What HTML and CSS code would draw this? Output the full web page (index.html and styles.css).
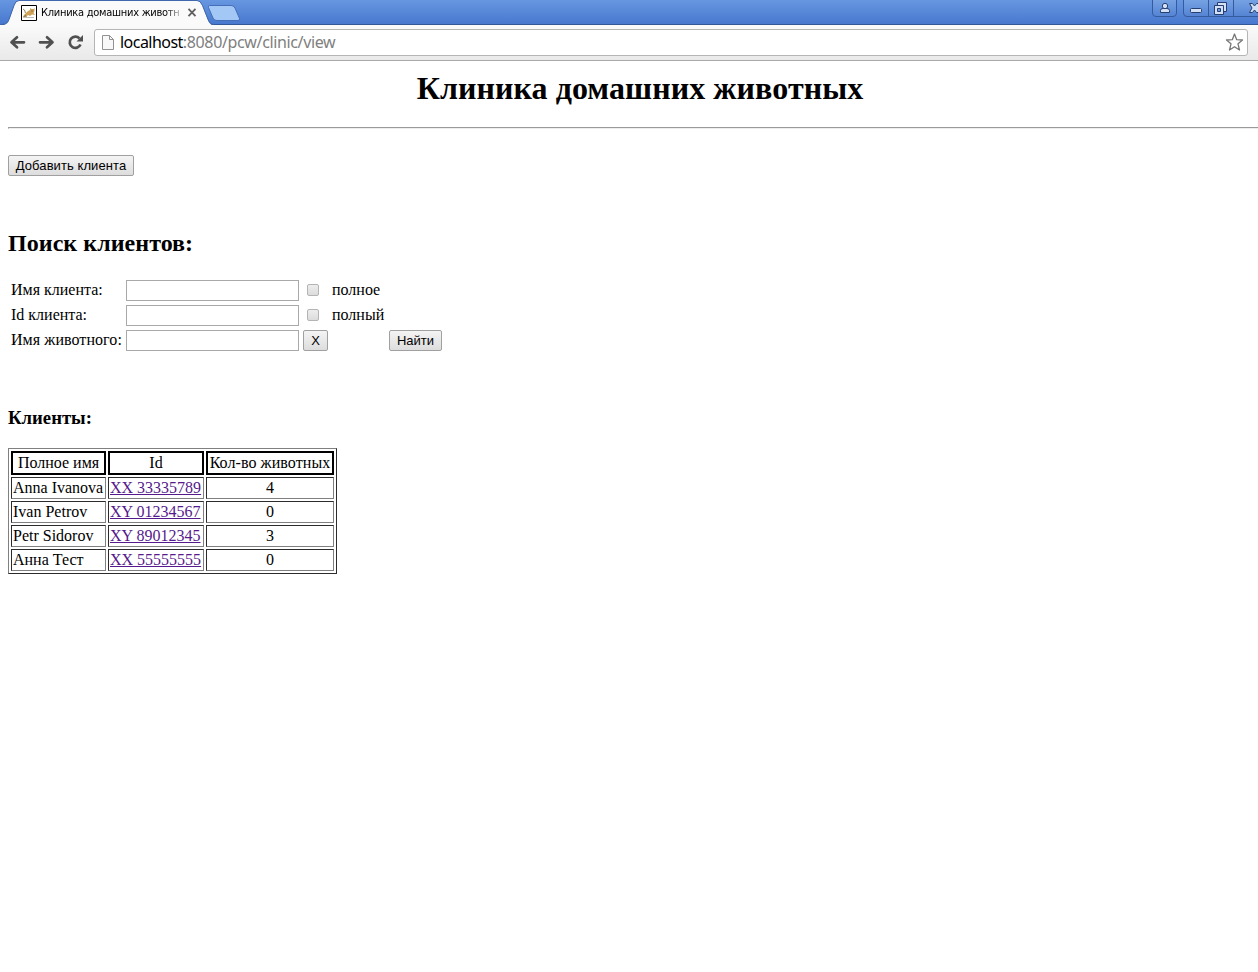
FILE: index.html
```html
<!DOCTYPE html>
<html lang="ru">
<head>
<meta charset="utf-8">
<title>Клиника домашних животных</title>
<link rel="stylesheet" href="styles.css">
</head>
<body>
<header class="browser">
  <div class="tabstrip">
    <svg class="frame" width="1258" height="26" viewBox="0 0 1258 26">
      <defs>
        <linearGradient id="sky" x1="0" y1="0" x2="0" y2="1"><stop offset="0" stop-color="#6797e0"/><stop offset="1" stop-color="#4778cf"/></linearGradient>
        <linearGradient id="btn" x1="0" y1="0" x2="0" y2="1"><stop offset="0" stop-color="#78a4e4"/><stop offset="1" stop-color="#5483d3"/></linearGradient>
      </defs>
      <rect width="1258" height="24" fill="url(#sky)"/>
      <rect y="24" width="1258" height="1" fill="#345797"/>
      <path d="M0 25.500C7 25 8 23 9.500 19L14 6Q15.500 .7 19 .7H197Q200.500 .7 202.500 6L207.500 19Q209.500 25 214 25.500V26H0Z" fill="#fafafa"/>
      <path d="M0 24.500C7 24.500 8 22 9.500 18L14 5.500Q15.500 .5 19 .5H197Q200.500 .5 202.500 5.500L207.500 18Q209.500 24.500 214 24.500" fill="none" stroke="#4168ae"/>
      <path d="M209.500 5.500H231Q234 5.500 235 8L239.500 18.500Q240 20.500 238 20.500H217Q214 20.500 213 18L208.500 7.500Q208 5.500 209.500 5.500Z" fill="#a4c8f6" stroke="#446eb7"/>
      <g fill="url(#btn)" stroke="#355a9e">
        <path d="M1152.500 -1V13Q1152.500 16.500 1156 16.500H1173Q1176.500 16.500 1176.500 13V-1Z"/>
        <path d="M1183.500 -1V13Q1183.500 16.500 1187 16.500H1260V-1Z"/>
        <path d="M1208.500 0V16M1233.500 0V16"/>
      </g>
      <g fill="#d3e1f7" stroke="#263f70">
        <path d="M1160.500 12.500V10.500Q1160.500 8.500 1163 8.500H1167Q1169.500 8.500 1169.500 10.500V12.500Z"/>
        <circle cx="1165" cy="6" r="2.700"/>
        <rect x="1190.500" y="8.500" width="11" height="4" rx="1"/>
        <path d="M1217.500 2.500H1226.500V11.500H1217.500Z"/>
        <path d="M1214.500 5.500H1223.500V14.500H1214.500Z"/>
        <path d="M1217.500 8.500H1220.500V11.500H1217.500Z" fill="#6e9ae0"/>
        <path d="M1249.500 3.500H1252.500L1254.500 6L1256.500 3.500H1260V12.500H1256.500L1254.500 10L1252.500 12.500H1249.500L1252 8Z"/>
      </g>
    </svg>
    <div class="tab">
      <svg class="favicon" width="16" height="16" viewBox="0 0 16 16">
        <path d="M.5 .5H15.500V15.500H.5Z" fill="#fff" stroke="#000"/>
        <path d="M7 6L9 5V3L10.500 4L12.500 4L13.500 3V6L12.500 8L14 10L11 9.500L9 11L7 10L5 12L2 12L3 10L5 8Z" fill="#cfa25a"/>
        <path d="M2 4L3.500 5L4.500 8M5 10L2.500 12H6M10 6H12" fill="none" stroke="#8a7458" stroke-width=".9"/>
        <path d="M6 12.500H13" stroke="#bbb"/>
      </svg>
      <span class="tab-title">Клиника домашних животн</span>
      <svg class="close" width="10" height="9" viewBox="0 0 10 9"><path d="M1.500 .8L8.500 8.200M8.500 .8L1.500 8.200" stroke="#606060" stroke-width="1.800"/></svg>
    </div>
  </div>
  <div class="toolbar">
    <svg width="78" height="22" viewBox="0 0 78 22" fill="none" stroke="#505050" stroke-width="2.700" stroke-linecap="round" stroke-linejoin="round">
      <path d="M4 11.300H16M9 6.300L3.500 11.300L9 16.300"/>
      <path d="M32 11.300H44M39 6.300L44.500 11.300L39 16.300"/>
      <path d="M71.500 7.500A5.600 5.600 0 1 0 72.500 13.500" stroke-linecap="butt"/>
      <path d="M75 4V10.500H68.500Z" fill="#505050" stroke="none"/>
    </svg>
    <div class="address">
      <svg width="12" height="15" viewBox="0 0 12 15"><path d="M.5 .5H7.500L11.500 4.500V14.500H.5Z" fill="#f8f8f8" stroke="#929292"/><path d="M7.500 .5V4.500H11.500" fill="none" stroke="#929292"/></svg>
      <span class="url"><b>localhost</b>:8080/pcw/clinic/view</span>
      <svg class="star" width="20" height="20" viewBox="0 0 20 20"><path d="M10.500 2L12.700 7.700L18.500 8L14 11.800L15.500 18L10.500 14.700L5.500 18L7 11.800L2.500 8L8.300 7.700Z" fill="#fff" stroke="#777" stroke-width="1.300" stroke-linejoin="round"/></svg>
    </div>
  </div>
</header>
<main class="page">
  <h1>Клиника домашних животных</h1>
  <hr>
  <button class="button add">Добавить клиента</button>
  <h2>Поиск клиентов:</h2>
  <form class="search">
    <label>Имя клиента:</label><input class="field" type="text"><input class="check" type="checkbox"><span>полное</span><span></span>
    <label>Id клиента:</label><input class="field" type="text"><input class="check" type="checkbox"><span>полный</span><span></span>
    <label class="pet">Имя животного:</label><input class="field" type="text"><button class="button clear" type="button">X</button><span></span><button class="button find" type="button">Найти</button>
  </form>
  <h3>Клиенты:</h3>
  <table class="clients">
    <colgroup><col class="c1"><col class="c2"><col class="c3"></colgroup>
    <tr class="head"><td>Полное имя</td><td>Id</td><td class="count">Кол-во животных</td></tr>
    <tr><td>Anna Ivanova</td><td><a href="#">XX 33335789</a></td><td>4</td></tr>
    <tr><td>Ivan Petrov</td><td><a href="#">XY 01234567</a></td><td>0</td></tr>
    <tr><td>Petr Sidorov</td><td><a href="#">XY 89012345</a></td><td>3</td></tr>
    <tr><td>Анна Тест</td><td><a href="#">XX 55555555</a></td><td>0</td></tr>
  </table>
</main>
</body>
</html>
```
FILE: styles.css
```css
* { box-sizing: border-box; }
html { overflow: hidden; background: #fff; }
body { margin: 0; width: 1258px; height: 972px; overflow: hidden; font: 16px/20px "Liberation Serif", "Times New Roman", serif; color: #000; }
.tabstrip { position: relative; height: 25px; }
.frame { position: absolute; left: 0; top: 0; }
.tab { position: relative; display: flex; align-items: center; width: 197px; height: 25px; padding-left: 21px; }
.tab-title { width: 140px; margin: 0 6px 0 4px; white-space: nowrap; font: 11px/16px "DejaVu Sans Condensed", "Noto Sans", sans-serif; letter-spacing: -.27px; -webkit-mask-image: linear-gradient(90deg, #000 125px, rgba(0, 0, 0, .2)); mask-image: linear-gradient(90deg, #000 125px, rgba(0, 0, 0, .2)); }
.favicon, .close { flex: none; }
.toolbar { display: flex; align-items: center; height: 36px; padding: 0 10px 1px 8px; gap: 8px; background: linear-gradient(#fafafa, #e9e9e9); border-bottom: 1px solid #a9a9a9; }
.address { display: flex; align-items: center; flex: 1; height: 27px; padding: 0 3px 0 7px; border: 1px solid #b5b5b5; border-radius: 3px; background: #fff; }
.url { margin-left: 6px; font: 16px/20px "Noto Sans", sans-serif; letter-spacing: -.36px; color: #808080; white-space: nowrap; }
.url b { font-weight: 400; letter-spacing: -.53px; color: #000; }
.star { margin-left: auto; }
.page { width: 1280px; padding: 8px; }
h1, h2, h3 { margin: 0; font-weight: 700; }
h1 { height: 58px; font-size: 32px; line-height: 38px; letter-spacing: .07px; text-align: center; }
hr { height: 2px; margin: 0; border: 1px inset #eee; }
.button { height: 21px; padding: 0; border: 1px solid #a0a0a0; border-radius: 2px; background: linear-gradient(#f4f4f4, #ddd); color: #000; font: 13px/19px "Liberation Sans", Arial, sans-serif; white-space: nowrap; }
.add { display: block; width: 126px; margin-top: 26px; letter-spacing: .08px; }
h2 { height: 28px; margin-top: 53px; font-size: 24px; line-height: 28px; letter-spacing: .05px; }
.search { display: grid; grid-template-columns: 115px 177px 29px 57px 53px; grid-auto-rows: 21px; row-gap: 4px; margin: 23px 0 0 3px; }
.search > *, .clients td { white-space: nowrap; }
.pet { letter-spacing: .06px; }
.field { width: 173px; height: 21px; border: 1px solid #a9a9a9; padding: 1px; }
.check { appearance: none; width: 12px; height: 12px; margin: 4px 0 0 4px; border: 1px solid #b4b4b4; border-radius: 2px; background: linear-gradient(#ededed, #dcdcdc); }
.clear { width: 25px; }
.find { width: 53px; }
h3 { height: 22px; margin-top: 56px; font-size: 18.720px; line-height: 22px; }
.clients { width: 329px; height: 126px; margin-top: 19px; border: 1px solid; border-color: #808080 #2c2c2c #2c2c2c #808080; border-spacing: 2px; table-layout: fixed; }
.c1 { width: 95px; } .c2 { width: 96px; } .c3 { width: 128px; }
.clients tr { height: 22px; }
.clients td { height: 22px; padding: 0 1px; border: 1px solid; border-color: #2c2c2c #808080 #808080 #2c2c2c; line-height: 20px; }
.clients .head { height: 24px; }
.clients .head td { height: 24px; padding: 0; border: 2px solid #000; text-align: center; }
.clients td:last-child { text-align: center; }
.clients .count { letter-spacing: .07px; }
.clients a { color: #551a8b; }
```
